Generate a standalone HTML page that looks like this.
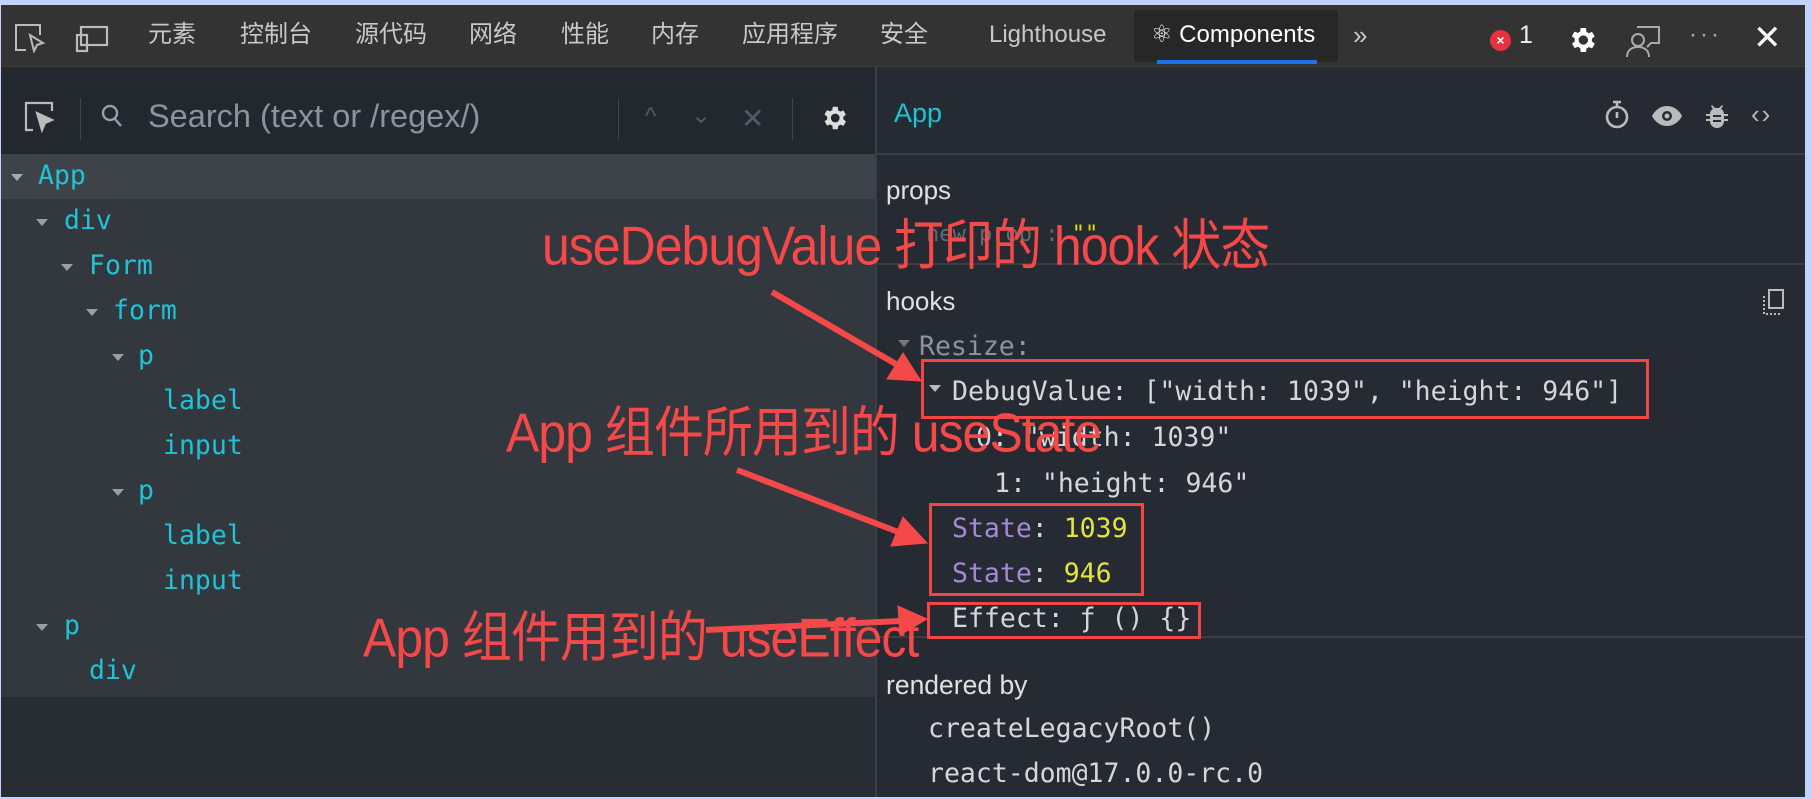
<!DOCTYPE html>
<html><head><meta charset="utf-8">
<style>
*{margin:0;padding:0;box-sizing:border-box}
html,body{width:1812px;height:799px;overflow:hidden;background:#c3d2fd}
#app{position:absolute;left:1px;top:5px;width:1804px;height:792px;background:#282c33;overflow:hidden;font-family:"Liberation Sans","Noto Sans CJK SC",sans-serif}
.a{position:absolute;white-space:nowrap}
.tab{position:absolute;top:15px;font-size:24px;color:#c8c8c8;line-height:30px}
.mono{font-family:"DejaVu Sans Mono","Liberation Mono",monospace}
.tree{position:absolute;font-size:26.5px;color:#1fc3d6;line-height:30px}
.arr{position:absolute;width:0;height:0;border-left:6px solid transparent;border-right:6px solid transparent;border-top:7px solid #9a9ea6}
.r{position:absolute;font-size:26.5px;color:#d4d6da;line-height:30px}
.box{position:absolute;border:3px solid #f24545}
.ann{position:absolute;color:#f54848;font-size:50px;line-height:56px;white-space:nowrap;letter-spacing:-1px;transform:scaleY(1.1);transform-origin:left center}
</style></head><body>
<div id="app">
<!-- tab bar -->
<div class="a" style="left:0;top:0;width:1804px;height:62px;background:#333333;border-bottom:1px solid #3c3c3c"></div>
<svg class="a" style="left:13px;top:18px" width="34" height="30" viewBox="0 0 34 30" fill="none" stroke="#bbb" stroke-width="2"><path d="M12 27H2V2h24v10"/><path d="M16 12l4 16 3-6 6-2z" fill="none"/></svg>
<svg class="a" style="left:74px;top:20px" width="34" height="28" viewBox="0 0 34 28" fill="none" stroke="#bbb" stroke-width="2.2"><rect x="6" y="2" width="26" height="18"/><rect x="2" y="10" width="10" height="16"/></svg>
<div class="tab" style="left:147px">元素</div>
<div class="tab" style="left:239px">控制台</div>
<div class="tab" style="left:354px">源代码</div>
<div class="tab" style="left:468px">网络</div>
<div class="tab" style="left:560px">性能</div>
<div class="tab" style="left:650px">内存</div>
<div class="tab" style="left:741px">应用程序</div>
<div class="tab" style="left:879px">安全</div>
<div class="tab" style="left:988px">Lighthouse</div>
<div class="a" style="left:1133px;top:5px;width:204px;height:52px;background:#272727;border-radius:3px"></div>
<div class="tab" style="left:1150px;color:#fff">⚛ Components</div>
<div class="a" style="left:1156px;top:55px;width:160px;height:4px;background:#1a73e8"></div>
<div class="tab" style="left:1352px;font-size:26px">»</div>
<div class="a" style="left:1489px;top:25px;width:21px;height:21px;border-radius:50%;background:#e8303e;color:#fff;font-size:14px;line-height:21px;text-align:center;font-weight:bold">×</div>
<div class="tab" style="left:1518px;color:#eee;font-size:25px">1</div>
<svg class="a" style="left:1565px;top:19px" width="32" height="32" viewBox="0 0 24 24"><path fill="#fff" d="M19.4 13a7.5 7.5 0 000-2l2.1-1.6-2-3.5-2.5 1a7.3 7.3 0 00-1.7-1L15 3h-4l-.4 2.7a7.3 7.3 0 00-1.7 1l-2.5-1-2 3.5L6.6 11a7.5 7.5 0 000 2l-2.1 1.6 2 3.5 2.5-1a7.3 7.3 0 001.7 1L11 21h4l.4-2.7a7.3 7.3 0 001.7-1l2.5 1 2-3.5zM13 15.5a3.5 3.5 0 110-7 3.5 3.5 0 010 7z"/></svg>
<svg class="a" style="left:1624px;top:18px" width="36" height="36" viewBox="0 0 36 36" fill="none" stroke="#aaa" stroke-width="2"><path d="M12 4h22v16h-8l-4 4"/><circle cx="13" cy="17" r="6"/><path d="M2 34c0-7 5-10 11-10s11 3 11 10"/></svg>
<div class="a" style="left:1688px;top:16px;color:#aaa;font-size:24px;letter-spacing:3px">···</div>
<div class="a" style="left:1752px;top:15px;color:#fff;font-size:34px;line-height:36px">✕</div>

<!-- left toolbar -->
<div class="a" style="left:0;top:62px;width:874px;height:87px;background:#23272e"></div>
<div class="a" style="left:0;top:149px;width:874px;height:543px;background:#33373e"></div>
<div class="a" style="left:0;top:149px;width:874px;height:45px;background:#3e434a"></div>
<svg class="a" style="left:22px;top:95px" width="34" height="34" viewBox="0 0 34 34" fill="none" stroke="#bbb" stroke-width="2.2"><path d="M10 30H3V3h26v8"/><path d="M14 13l5 17 3-7 7-3z" fill="#bbb"/></svg>
<div class="a" style="left:79px;top:93px;width:1px;height:42px;background:#444"></div>
<svg class="a" style="left:100px;top:99px" width="22" height="24" viewBox="0 0 22 24" fill="none" stroke="#9a9ea6" stroke-width="2.4"><circle cx="9" cy="9" r="7"/><path d="M14 15l6 7"/></svg>
<div class="a" style="left:147px;top:92px;color:#8e939b;font-size:32.5px;line-height:38px">Search (text or /regex/)</div>
<div class="a" style="left:617px;top:93px;width:1px;height:42px;background:#444"></div>
<div class="a" style="left:644px;top:98px;color:#555a62;font-size:24px">^</div>
<div class="a" style="left:690px;top:96px;color:#555a62;font-size:24px">⌄</div>
<div class="a" style="left:740px;top:97px;color:#555a62;font-size:28px">✕</div>
<div class="a" style="left:791px;top:93px;width:1px;height:42px;background:#444"></div>
<svg class="a" style="left:818px;top:98px" width="30" height="30" viewBox="0 0 24 24"><path fill="#ddd" d="M19.4 13a7.5 7.5 0 000-2l2.1-1.6-2-3.5-2.5 1a7.3 7.3 0 00-1.7-1L15 3h-4l-.4 2.7a7.3 7.3 0 00-1.7 1l-2.5-1-2 3.5L6.6 11a7.5 7.5 0 000 2l-2.1 1.6 2 3.5 2.5-1a7.3 7.3 0 001.7 1L11 21h4l.4-2.7a7.3 7.3 0 001.7-1l2.5 1 2-3.5zM13 15.5a3.5 3.5 0 110-7 3.5 3.5 0 010 7z"/></svg>

<!-- tree -->
<div class="arr" style="left:10px;top:169px;border-top-color:#aaa"></div><div class="tree mono" style="left:37px;top:156px">App</div>
<div class="arr" style="left:35px;top:214px"></div><div class="tree mono" style="left:63px;top:201px">div</div>
<div class="arr" style="left:60px;top:259px"></div><div class="tree mono" style="left:88px;top:246px">Form</div>
<div class="arr" style="left:85px;top:304px"></div><div class="tree mono" style="left:112px;top:291px">form</div>
<div class="arr" style="left:111px;top:349px"></div><div class="tree mono" style="left:137px;top:336px">p</div>
<div class="tree mono" style="left:162px;top:381px">label</div>
<div class="tree mono" style="left:162px;top:426px">input</div>
<div class="arr" style="left:111px;top:484px"></div><div class="tree mono" style="left:137px;top:471px">p</div>
<div class="tree mono" style="left:162px;top:516px">label</div>
<div class="tree mono" style="left:162px;top:561px">input</div>
<div class="arr" style="left:35px;top:619px"></div><div class="tree mono" style="left:63px;top:606px">p</div>
<div class="tree mono" style="left:88px;top:651px">div</div>

<!-- right pane -->
<div class="a" style="left:874px;top:62px;width:2px;height:730px;background:#3a3e45"></div>
<div class="a" style="left:876px;top:62px;width:928px;height:730px;background:#262a32"></div>
<div class="a" style="left:876px;top:148px;width:928px;height:2px;background:#3a3e45"></div>
<div class="a" style="left:876px;top:258px;width:928px;height:2px;background:#3a3e45"></div>
<div class="a" style="left:876px;top:631px;width:928px;height:2px;background:#3a3e45"></div>
<div class="tree" style="left:893px;top:93px;font-size:27px;font-family:'Liberation Sans',sans-serif">App</div>
<svg class="a" style="left:1603px;top:93px" width="26" height="34" viewBox="0 0 26 34" fill="none" stroke="#bbb" stroke-width="2.6"><circle cx="13" cy="19" r="10"/><path d="M9 4h8M13 4v5M13 14v6"/></svg>
<svg class="a" style="left:1650px;top:100px" width="32" height="22" viewBox="0 0 32 22"><path fill="#bbb" d="M16 1C8 1 3 7 1 11c2 4 7 10 15 10s13-6 15-10C29 7 24 1 16 1z"/><circle cx="16" cy="11" r="5" fill="#262a32"/><circle cx="16" cy="11" r="2.5" fill="#bbb"/></svg>
<svg class="a" style="left:1703px;top:96px" width="26" height="30" viewBox="0 0 26 30"><path fill="#bbb" d="M8 4l3 3h4l3-3 1 1-2 3c2 1 3 3 3 5h4v2h-4v3h4v2h-4c0 4-3 7-7 7s-7-3-7-7H2v-2h4v-3H2v-2h4c0-2 1-4 3-5L7 5z"/><path stroke="#262a32" stroke-width="2" d="M9 15h8M9 20h8"/></svg>
<div class="a" style="left:1750px;top:94px;color:#bbb;font-size:26px;letter-spacing:2px">‹›</div>

<div class="a" style="left:885px;top:170px;color:#e0e0e0;font-size:26px">props</div>
<div class="r mono" style="left:925px;top:215px;color:#666a70;font-size:22px">new prop  :  <span style="color:#e0e000">""</span></div>
<div class="a" style="left:885px;top:281px;color:#e0e0e0;font-size:26px">hooks</div>
<svg class="a" style="left:1760px;top:283px" width="24" height="28" viewBox="0 0 24 28" fill="none" stroke="#bbb" stroke-width="2"><rect x="8" y="2" width="14" height="18"/><path d="M3 8v18h16" stroke-dasharray="2 2"/></svg>

<div class="arr" style="left:897px;top:335px;border-top-color:#777"></div>
<div class="r mono" style="left:918px;top:327px;color:#8e939b">Resize:</div>
<div class="arr" style="left:928px;top:380px;border-top-color:#bbb"></div>
<div class="r mono" style="left:951px;top:372px">DebugValue: ["width: 1039", "height: 946"]</div>
<div class="r mono" style="left:975px;top:418px">0: "width: 1039"</div>
<div class="r mono" style="left:993px;top:464px">1: "height: 946"</div>
<div class="r mono" style="left:951px;top:509px"><span style="color:#a58ad6">State</span>:  <span style="color:#e4e43c">1039</span></div>
<div class="r mono" style="left:951px;top:554px"><span style="color:#a58ad6">State</span>:  <span style="color:#e4e43c">946</span></div>
<div class="r mono" style="left:951px;top:599px">Effect: ƒ () {}</div>
<div class="a" style="left:885px;top:665px;color:#e0e0e0;font-size:26.5px">rendered by</div>
<div class="r mono" style="left:927px;top:709px">createLegacyRoot()</div>
<div class="r mono" style="left:927px;top:754px">react-dom@17.0.0-rc.0</div>

<!-- red boxes -->
<div class="box" style="left:920px;top:354px;width:728px;height:60px"></div>
<div class="box" style="left:928px;top:498px;width:215px;height:93px"></div>
<div class="box" style="left:926px;top:597px;width:274px;height:37px"></div>

<!-- annotations -->
<div class="ann" style="left:541px;top:213px">useDebugValue 打印的 hook 状态</div>
<div class="ann" style="left:505px;top:400px">App 组件所用到的 useState</div>
<div class="ann" style="left:362px;top:605px">App 组件用到的 useEffect</div>
<svg class="a" style="left:0;top:0" width="1804" height="792">
<g stroke="#f54848" stroke-width="6" fill="#f54848">
<line x1="771" y1="287" x2="900" y2="362"/><polygon points="920,376 886,374 902,348" stroke-width="1"/>
<line x1="736" y1="465" x2="905" y2="530"/><polygon points="926,538 890,541 902,512" stroke-width="1"/>
<line x1="705" y1="625" x2="900" y2="616"/><polygon points="926,614 897,601 899,630" stroke-width="1"/>
</g></svg>
</div>
</body></html>
